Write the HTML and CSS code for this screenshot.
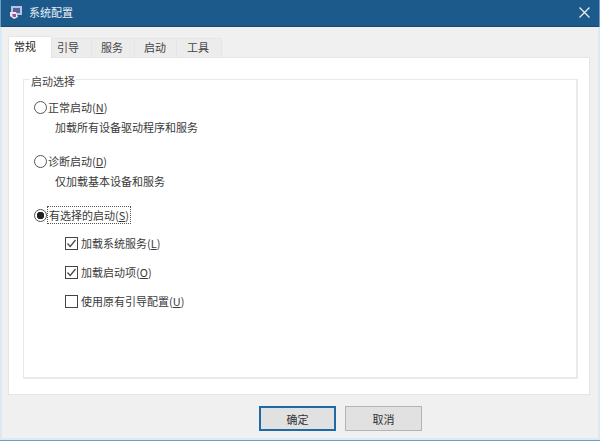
FILE: index.html
```html
<!DOCTYPE html>
<html lang="zh-CN">

<head>
    <meta charset="UTF-8">
    <title>系统配置</title>
    <link rel="stylesheet" href="styles.css">
</head>

<body>
    <div class="window">
        <div class="titlebar">
            <svg class="app-icon" width="14" height="15" viewBox="0 0 14 15">
                <rect x="2" y="1" width="11" height="9" fill="#b9c2e0" />
                <rect x="4" y="3" width="7" height="5" fill="#59619f" />
                <path d="M1 7 L7 7 L9 12 L5 14 L1 11 Z" fill="#e8e8f4" />
                <path d="M3 9 L7 9 L7 12 L4 12 Z" fill="#a8508f" />
            </svg>
            <span class="title">系统配置</span>
            <svg class="close" width="11" height="11" viewBox="0 0 11 11">
                <path d="M0.5 0.5 L10.5 10.5 M10.5 0.5 L0.5 10.5" stroke="#e6edf3" stroke-width="1.3" fill="none" />
            </svg>
        </div>

        <div class="content">
            <div class="tabs">
                <div class="tab active">常规</div>
                <div class="tab t-boot">引导</div>
                <div class="tab t-serv">服务</div>
                <div class="tab t-start">启动</div>
                <div class="tab t-tool">工具</div>
            </div>

            <div class="panel">
                <fieldset class="group">
                    <legend>启动选择</legend>

                    <div class="option first">
                        <span class="radio"></span>
                        <span>正常启动(<u>N</u>)</span>
                    </div>
                    <div class="desc">加载所有设备驱动程序和服务</div>

                    <div class="option second">
                        <span class="radio"></span>
                        <span>诊断启动(<u>D</u>)</span>
                    </div>
                    <div class="desc">仅加载基本设备和服务</div>

                    <div class="option third">
                        <span class="radio on"></span>
                        <span class="focus">有选择的启动(<u>S</u>)</span>
                    </div>

                    <div class="check-row">
                        <svg class="check" width="13" height="13" viewBox="0 0 13 13">
                            <rect x="0.5" y="0.5" width="12" height="12" fill="#fff" stroke="#444" />
                            <path d="M2.5 6.5 L5.2 9.5 L10.5 3" stroke="#444" stroke-width="1.2" fill="none" />
                        </svg>
                        <span>加载系统服务(<u>L</u>)</span>
                    </div>
                    <div class="check-row">
                        <svg class="check" width="13" height="13" viewBox="0 0 13 13">
                            <rect x="0.5" y="0.5" width="12" height="12" fill="#fff" stroke="#444" />
                            <path d="M2.5 6.5 L5.2 9.5 L10.5 3" stroke="#444" stroke-width="1.2" fill="none" />
                        </svg>
                        <span>加载启动项(<u>O</u>)</span>
                    </div>
                    <div class="check-row">
                        <svg class="check" width="13" height="13" viewBox="0 0 13 13">
                            <rect x="0.5" y="0.5" width="12" height="12" fill="#fff" stroke="#444" />
                        </svg>
                        <span>使用原有引导配置(<u>U</u>)</span>
                    </div>
                </fieldset>
            </div>

            <div class="buttons">
                <button class="btn default">确定</button>
                <button class="btn">取消</button>
            </div>
        </div>
    </div>
</body>

</html>
```

FILE: styles.css
```css
html,
body {
    margin: 0;
    padding: 0;
}

body {
    width: 600px;
    height: 441px;
    overflow: hidden;
    font-family: "Noto Sans CJK SC", "Liberation Sans", sans-serif;
    font-size: 11px;
    color: #3a3a3a;
}

.window {
    box-sizing: border-box;
    width: 600px;
    height: 441px;
    display: flex;
    flex-direction: column;
    background: #f0f0f0;
    border: 1px solid #6f9cc4;
    border-top: none;
}

.titlebar {
    box-sizing: border-box;
    height: 27px;
    display: flex;
    align-items: center;
    padding: 0 9px 2px 8px;
    background: #1d5a8c;
    border-bottom: 1px solid #17496f;
    color: #e8eff5;
    flex-shrink: 0;
}

.title {
    margin-left: 6px;
}

.close {
    margin-left: auto;
}

.content {
    flex: 1;
    display: flex;
    flex-direction: column;
    padding: 10px 8px 0 6px;
    border-left: 2px solid #dbe9f5;
    border-bottom: 2px solid #dbe9f5;
    border-right: 2px solid #dbe9f5;
    margin-left: -1px;
    margin-right: -1px;
}

.tabs {
    display: flex;
    height: 20px;
}

.tab {
    box-sizing: border-box;
    margin-top: 1px;
    line-height: 17px;
    background: #ececec;
    border-top: 1px solid #e6e6e6;
    border-right: 1px solid #e6e6e6;
    color: #444;
}

.tab.active {
    width: 44px;
    margin-top: -1px;
    height: 22px;
    line-height: 19px;
    background: #fff;
    border: 1px solid #e6e6e6;
    border-bottom: none;
    padding-left: 5px;
    position: relative;
    z-index: 1;
    color: #222;
}

.t-boot {
    width: 40px;
    padding-left: 5px;
}

.t-serv {
    width: 43px;
    padding-left: 9px;
}

.t-start {
    width: 42px;
    padding-left: 9px;
}

.t-tool {
    width: 45px;
    padding-left: 10px;
}

.panel {
    box-sizing: border-box;
    width: 582px;
    height: 338px;
    background: #fff;
    border: 1px solid #e6e6e6;
    padding: 11px 11px 0 14px;
}

.group {
    box-sizing: border-box;
    margin: 0;
    height: 310px;
    width: 555px;
    padding: 0 0 0 10px;
    border: 1px solid #e9e9e9;
    border-right-width: 2px;
    border-bottom-width: 2px;
}

.group legend {
    padding: 4px 1px 0;
    margin-left: -4px;
    line-height: 16px;
    color: #444;
}

.option {
    display: flex;
    align-items: center;
    gap: 1px;
    height: 16px;
}

.first {
    margin-top: 10px;
}

.second {
    margin-top: 18px;
}

.third {
    margin-top: 18px;
}

.radio {
    box-sizing: border-box;
    width: 13px;
    height: 13px;
    border-radius: 50%;
    border: 1px solid #555;
    background: #fff;
}

.radio.on {
    background: radial-gradient(circle, #222 0 3.5px, #fff 4px);
}

.focus {
    outline: 1px dotted #555;
    outline-offset: 0;
    padding: 0 1px;
}

.desc {
    margin-top: 4px;
    margin-left: 21px;
    height: 16px;
    line-height: 16px;
}

.check-row {
    display: flex;
    align-items: center;
    gap: 3px;
    height: 16px;
    margin-top: 13px;
    margin-left: 31px;
}

.third+.check-row {
    margin-top: 12px;
}

.buttons {
    display: flex;
    gap: 9px;
    margin-top: 11px;
    padding-left: 251px;
}

.btn {
    box-sizing: border-box;
    width: 77px;
    height: 25px;
    padding: 0;
    font: inherit;
    color: #333;
    background: #e1e1e1;
    border: 1px solid #b4b4b4;
}

.btn.default {
    border: 2px solid #1f6aa5;
}
```
